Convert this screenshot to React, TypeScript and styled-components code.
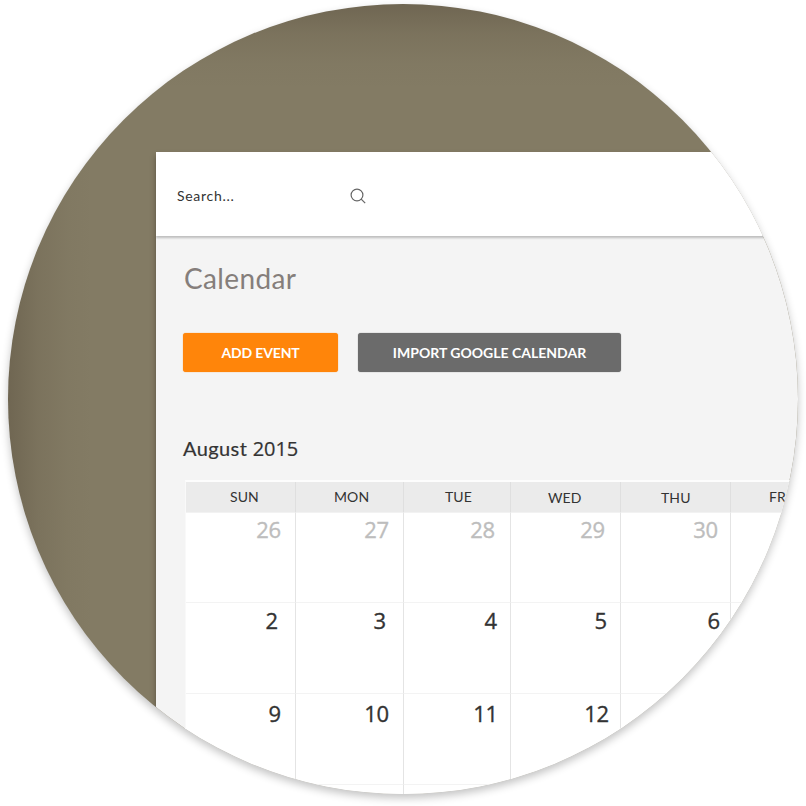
import React from "react";
import styled, { createGlobalStyle } from "styled-components";

const GlobalStyle = createGlobalStyle`
  html, body { margin: 0; background: #fff; }
  body { font-family: Lato, "Open Sans", sans-serif; color: #333; }
`;

const Stage = styled.main`
  box-sizing: border-box;
  width: 806px;
  height: 806px;
  padding: 4px 8px;
  overflow: hidden;
  background: #fff;
`;

const Lens = styled.div`
  box-sizing: border-box;
  width: 790px;
  height: 790px;
  padding: 148px 0 0 148px;
  border-radius: 50%;
  overflow: hidden;
  background:
    linear-gradient(to right, rgba(70, 58, 44, 0.32), rgba(70, 58, 44, 0.13) 30px, rgba(70, 58, 44, 0.03) 60px, transparent 85px),
    linear-gradient(to bottom, rgba(70, 58, 44, 0.32), rgba(70, 58, 44, 0.13) 30px, rgba(70, 58, 44, 0.03) 60px, transparent 85px),
    #837b64;
  box-shadow: 0 4px 8px rgba(0, 0, 0, 0.24);
`;

const Window = styled.section`
  display: flex;
  flex-direction: column;
  width: 800px;
  height: 700px;
  background: #f4f4f4;
  box-shadow: 0 4px 5px rgba(50, 40, 30, 0.5);
`;

const TopBar = styled.header`
  display: flex;
  align-items: center;
  flex: none;
  box-sizing: border-box;
  height: 84px;
  padding: 3px 0 0 21px;
  background: #fff;
  box-shadow: 0 2px 2px rgba(0, 0, 0, 0.22);
  clip-path: inset(0 0 -6px 0);
`;

const SearchField = styled.div`
  display: flex;
  align-items: center;
  justify-content: space-between;
  width: 189px;
  font-size: 14px;
  line-height: 20px;
  letter-spacing: 0.7px;
`;

const SearchIcon = styled.svg`
  width: 16px;
  height: 16px;
  fill: none;
  stroke: #666;
  stroke-width: 1.2;
`;

const Body = styled.div`
  padding: 24px 0 0 27px;
`;

const Title = styled.h1`
  margin: 0 0 0 1px;
  font-size: 28px;
  line-height: 36px;
  font-weight: 400;
  letter-spacing: 0.35px;
  color: #857e7b;
`;

const Actions = styled.div`
  display: flex;
  gap: 20px;
  margin-top: 37px;
`;

const Button = styled.button<{ $tone: string; $width: number; $spacing: number }>`
  width: ${(p) => p.$width}px;
  height: 39px;
  padding: 1px 0 0;
  border: 0;
  border-radius: 3px;
  background: ${(p) => p.$tone};
  box-shadow: 0 0 1px ${(p) => p.$tone};
  color: #fff;
  font: 700 14px/20px Lato, sans-serif;
  letter-spacing: ${(p) => p.$spacing}px;
  white-space: nowrap;
`;

const Month = styled.h2`
  margin: 63px 0 0;
  font-size: 20px;
  line-height: 26px;
  font-weight: 400;
  letter-spacing: 0.4px;
  -webkit-text-stroke: 0.2px currentColor;
`;

const Numerals = styled.span`
  font-family: "Open Sans", sans-serif;
  letter-spacing: -0.1px;
`;

const Grid = styled.div`
  display: grid;
  grid-template-columns: 110px 108px 107px 110px 110px 110px;
  width: 655px;
  margin: 18px 0 0 2px;
  border-top: 2px solid #fdfdfd;
  border-left: 1px solid #f9f9f9;
  background: #fff;
`;

const DayName = styled.div<{ $inset: number; $drop: number }>`
  box-sizing: border-box;
  height: 31px;
  padding: ${(p) => 5 + p.$drop}px 0 0 ${(p) => p.$inset}px;
  border-right: 1px solid #dfdfdf;
  border-bottom: 1px solid #f2f2f2;
  background: #ebebeb;
  font-size: 14px;
  line-height: 20px;
  letter-spacing: 0.1px;
`;

const DateCell = styled.div<{ $inset: number; $row: number }>`
  box-sizing: border-box;
  height: ${(p) => (p.$row === 0 ? 90 : 91)}px;
  padding: ${(p) => [1, 2, 4, 4][p.$row]}px ${(p) => p.$inset}px 0 0;
  border-right: 1px solid #e4e4e4;
  border-bottom: 1px solid #f3f3f3;
  color: ${(p) => (p.$row === 0 ? "#bdbdbd" : "#333")};
  font: 400 22px/30px "Open Sans", sans-serif;
  -webkit-text-stroke: 0.35px currentColor;
  letter-spacing: -0.2px;
  text-align: right;
`;

type Day = { name: string; inset: number; drop: number };

const days: Day[] = [
  { name: "SUN", inset: 44, drop: 0 },
  { name: "MON", inset: 38, drop: 0 },
  { name: "TUE", inset: 41, drop: 0 },
  { name: "WED", inset: 37, drop: 1 },
  { name: "THU", inset: 40, drop: 1 },
  { name: "FRI", inset: 38, drop: 0 },
];

type DateEntry = [label: string, inset: number];

const weeks: DateEntry[][] = [
  [["26", 14], ["27", 14], ["28", 15], ["29", 15], ["30", 12], ["", 0]],
  [["2", 17], ["3", 17], ["4", 13], ["5", 13], ["6", 10], ["", 0]],
  [["9", 14], ["10", 14], ["11", 12], ["12", 11], ["", 0], ["", 0]],
  [["", 0], ["", 0], ["", 0], ["", 0], ["", 0], ["", 0]],
];

export default function App() {
  return (
    <Stage>
      <GlobalStyle />
      <Lens>
        <Window>
          <TopBar>
            <SearchField>
              <span>Search...</span>
              <SearchIcon viewBox="0 0 16 16" aria-label="Search">
                <circle cx="7" cy="7" r="5.9" />
                <path d="M11.2 11.2 15.2 15.2" />
              </SearchIcon>
            </SearchField>
          </TopBar>
          <Body>
            <Title>Calendar</Title>
            <Actions>
              <Button $tone="#ff850a" $width={155} $spacing={-0.15}>ADD EVENT</Button>
              <Button $tone="#6b6b6b" $width={263} $spacing={0}>IMPORT GOOGLE CALENDAR</Button>
            </Actions>
            <Month>
              August <Numerals>2015</Numerals>
            </Month>
            <Grid>
              {days.map((d) => (
                <DayName key={d.name} $inset={d.inset} $drop={d.drop}>{d.name}</DayName>
              ))}
              {weeks.map((week, row) =>
                week.map(([label, inset], column) => (
                  <DateCell key={`${row}-${column}`} $inset={inset} $row={row}>
                    {label}
                  </DateCell>
                ))
              )}
            </Grid>
          </Body>
        </Window>
      </Lens>
    </Stage>
  );
}
